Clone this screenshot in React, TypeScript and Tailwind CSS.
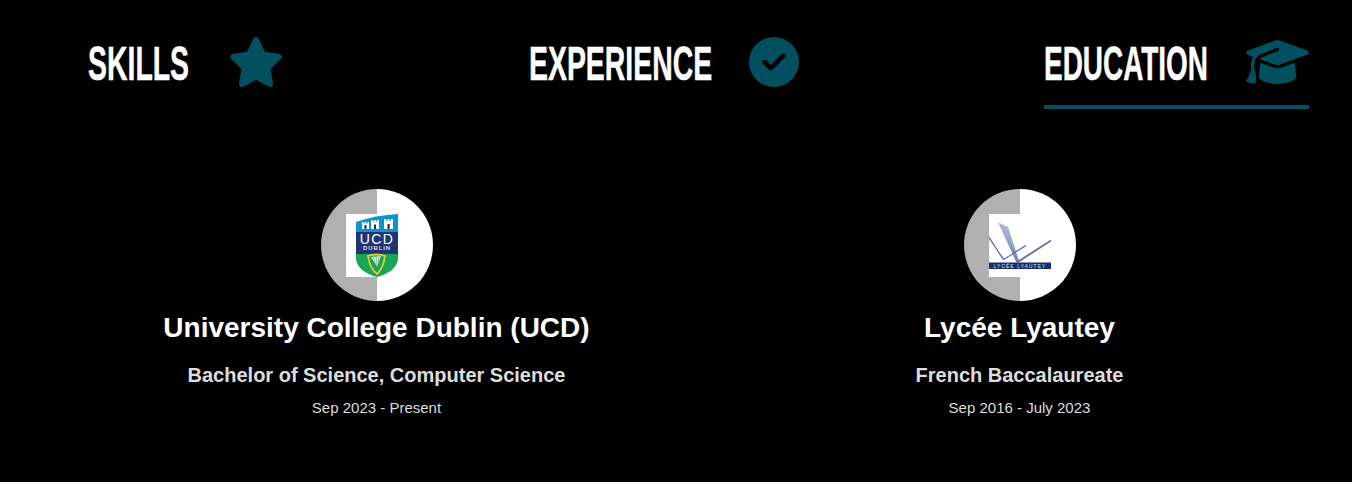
import React from "react";
import { FaStar, FaCircleCheck, FaGraduationCap } from "react-icons/fa6";

function Tab({ label, w, gap, children, active, className, scale }: { label: string; w: number; gap: number; children: React.ReactNode; active?: boolean; className?: string; scale: string }) {
  return (
    <div className={`flex flex-col border-b-4 ${active ? "border-[#00505f]" : "border-transparent"} ${className ?? ""}`}>
      <div className="flex items-center h-[50px] text-[#00505f]" style={{ gap }}>
        <div style={{ width: w }}>
          <span className={`font-['Liberation_Sans_Narrow','Liberation_Sans',sans-serif] block origin-left ${scale} whitespace-nowrap text-[49px] leading-[50px] font-bold text-white pt-[2px] [-webkit-text-stroke:0.5px_white]`}>{label}</span>
        </div>
        {children}
      </div>
      <div className="h-[18px]" />
    </div>
  );
}

function UcdLogo() {
  const f = "'Liberation Sans',sans-serif";
  return (
    <svg width="62" height="63" viewBox="0 0 62 63" className="block">
      <rect width="62" height="63" fill="#fff" />
      <path d="M10 8 Q30 1 52 0 V18 H10 Z" fill="#0a95cf" />
      <path d="M16 15 V8 H17.5 V9.5 H18.8 V8 H20.3 V9.5 H21.6 V8 H23 V15 Z" fill="#fff" />
      <path d="M25 15 V6 H27 V7.5 H28.2 V6 H29.8 V7.5 H31 V6 H33 V15 Z" fill="#fff" />
      <path d="M38 15 V5 H40 V6.5 H41.6 V5 H43.4 V6.5 H45 V5 H47 V15 Z" fill="#fff" />
      <rect x="18.5" y="11" width="2" height="4" fill="#1c2f6b" />
      <rect x="28" y="10.5" width="2" height="4.5" fill="#1c2f6b" />
      <rect x="41.5" y="10" width="2.2" height="5" fill="#1c2f6b" />
      <rect x="10" y="18" width="42" height="22" fill="#1f3474" />
      <text x="31" y="29.5" textAnchor="middle" fontFamily={f} fontSize="14" fill="#fff" letterSpacing="1.4">UCD</text>
      <text x="31" y="36" textAnchor="middle" fontFamily={f} fontWeight="700" fontSize="6" fill="#d8dcea" letterSpacing="0.9">DUBLIN</text>
      <path d="M10 40 H52 V44 C52 54 42 60 31 63 C20 60 10 54 10 44 Z" fill="#1aa457" />
      <path d="M22 42 C23 50 26 56 31 60 C35 56 38 50 39 42 C35 40 26 40 22 42 Z" fill="none" stroke="#e3cb3a" strokeWidth="1.8" />
      <path d="M25 43 L35 42 L31 53 Z" fill="#e4ead6" />
      <path d="M27.5 43 L30 52 M30.5 43 L31 53 M33 42.5 L32 52" stroke="#3a9a5a" strokeWidth="0.5" />
    </svg>
  );
}

function LyauteyLogo() {
  const c = "#2a4a8c";
  const f = "'Liberation Sans',sans-serif";
  const left = [0, 1, 2, 3];
  const fan = [0, 1, 2, 3, 4, 5, 6];
  return (
    <svg width="62" height="63" viewBox="0 0 62 63" className="block">
      <rect width="62" height="63" fill="#fff" />
      <g fill="none" stroke={c} strokeWidth="0.6" opacity="0.8">
        {left.map((i) => (
          <path key={i} d={`M0 ${22 + i} L${14 + i * 0.4} ${46 - i * 0.3} L37 ${31 + i * 0.3}`} />
        ))}
        {fan.map((i) => (
          <path key={i} d={`M${10 + i * 1.4} ${9 + i * 0.6} L${27.5 + i * 0.4} 48 L62 ${26 + i * 0.15}`} />
        ))}
      </g>
      <rect x="0" y="48.5" width="62" height="6.5" fill="#12306e" />
      <text x="31" y="53.6" textAnchor="middle" fontFamily={f} fontSize="4.8" fill="#e5e8f2" letterSpacing="1.15">LYCÉE LYAUTEY</text>
    </svg>
  );
}

function School({ title, degree, dates, logo }: { title: string; degree: string; dates: string; logo: React.ReactNode }) {
  return (
    <div className="flex flex-col items-center">
      <div className="w-[112px] h-[112px] rounded-full flex items-center justify-center bg-[linear-gradient(90deg,#b0b0b0_50%,#ffffff_50%)]">
        {logo}
      </div>
      <h3 className="mt-[9px] text-[28px] leading-[36px] font-bold text-white">{title}</h3>
      <p className="mt-[19px] text-[20px] leading-[20px] font-bold text-[#dddddd]">{degree}</p>
      <p className="mt-[14px] text-[15px] leading-[18px] text-[#dddddd]">{dates}</p>
    </div>
  );
}

export default function App() {
  return (
    <div className="w-[1352px] h-[482px] bg-black overflow-hidden font-['Liberation_Sans',Arial,sans-serif]">
      <div className="flex pl-[88px] pt-[37px]">
        <Tab label="SKILLS" w={101} gap={39} className="mr-[247px]" scale="scale-x-[0.58]">
          <FaStar className="w-[56px] h-[50px] -mr-[2px]" />
        </Tab>
        <Tab label="EXPERIENCE" w={182} gap={38} className="mr-[245px]" scale="scale-x-[0.58]">
          <FaCircleCheck className="w-[50px] h-[50px]" />
        </Tab>
        <Tab label="EDUCATION" w={164} gap={38} active scale="scale-x-[0.57]">
          <FaGraduationCap className="w-[63px] h-[50px]" />
        </Tab>
      </div>
      <div className="grid grid-cols-[643px_643px] pl-[55px] mt-[80px]">
        <School title="University College Dublin (UCD)" degree="Bachelor of Science, Computer Science" dates="Sep 2023 - Present" logo={<UcdLogo />} />
        <School title="Lycée Lyautey" degree="French Baccalaureate" dates="Sep 2016 - July 2023" logo={<LyauteyLogo />} />
      </div>
    </div>
  );
}
